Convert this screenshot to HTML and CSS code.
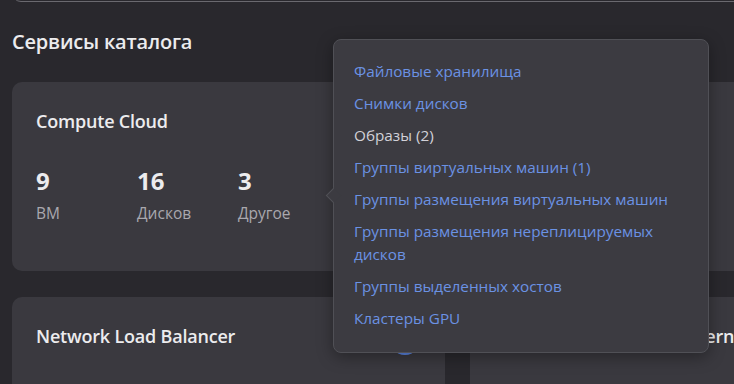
FILE: index.html
```html
<!DOCTYPE html>
<html lang="ru">
<head>
<meta charset="utf-8">
<title>Сервисы каталога</title>
<link rel="stylesheet" href="styles.css">
</head>
<body>
<div class="page">
  <div class="search"></div>
  <h2 class="heading">Сервисы каталога</h2>
  <div class="grid">
    <div class="card">
      <div class="card-head">
        <div class="card-title">Compute Cloud</div>
        <div class="ring"></div>
      </div>
      <div class="stats">
        <div class="stat"><div class="num">9</div><div class="lbl">ВМ</div></div>
        <div class="stat"><div class="num">16</div><div class="lbl">Дисков</div></div>
        <div class="stat"><div class="num">3</div><div class="lbl">Другое</div></div>
      </div>
    </div>
    <div class="card">
      <div class="card-head">
        <div class="card-title">Object Storage</div>
        <div class="ring"></div>
      </div>
    </div>
    <div class="card">
      <div class="card-head">
        <div class="card-title">Network Load Balancer</div>
        <div class="ring"></div>
      </div>
    </div>
    <div class="card">
      <div class="card-head">
        <div class="card-title">Managed Service for Kubernetes</div>
      </div>
    </div>
  </div>

  <div class="popup">
    <span class="arrow"></span>
    <ul class="menu">
      <li><a class="link">Файловые хранилища</a></li>
      <li><a class="link">Снимки дисков</a></li>
      <li><span class="plain">Образы (2)</span></li>
      <li><a class="link">Группы виртуальных машин (1)</a></li>
      <li><a class="link">Группы размещения виртуальных машин</a></li>
      <li><a class="link">Группы размещения нереплицируемых дисков</a></li>
      <li><a class="link">Группы выделенных хостов</a></li>
      <li><a class="link">Кластеры GPU</a></li>
    </ul>
  </div>
</div>
</body>
</html>
```

FILE: styles.css
```css
html, body {
  margin: 0;
  padding: 0;
  background: #29282d;
  overflow: hidden;
  width: 734px;
  height: 384px;
}
body {
  font-family: "Open Sans", "Noto Sans", sans-serif;
  color: #ececee;
}
.page {
  position: relative;
  display: flow-root;
  padding: 0 12px;
  height: 384px;
  overflow: hidden;
}
.search {
  height: 40px;
  margin-top: -40px;
  border: 1px solid #6a696f;
  border-radius: 9px;
  margin-right: -40px;
}
.heading {
  margin: 26px 0 0;
  font-size: 20px;
  line-height: 28px;
  font-weight: 600;
  color: #ececee;
  letter-spacing: -0.2px;
}
.grid {
  margin-top: 26px;
  display: grid;
  grid-template-columns: 433px 433px;
  column-gap: 25px;
  row-gap: 26px;
}
.card {
  background: #3a393f;
  border-radius: 10px;
  padding: 24px 24px 47px;
  min-height: 118px;
}
.card-head {
  display: flex;
  align-items: flex-start;
  justify-content: space-between;
  height: 30px;
}
.card-title {
  font-size: 18px;
  font-weight: 600;
  line-height: 30px;
  white-space: nowrap;
  letter-spacing: -0.2px;
  color: #ececee;
}
.ring {
  width: 26px;
  height: 26px;
  border: 3px solid #5b86e5;
  border-radius: 50%;
  flex: none;
  margin-top: 2px;
}
.stats {
  display: grid;
  grid-template-columns: 101px 101px 101px;
  margin-top: 30px;
}
.num {
  font-size: 24px;
  font-weight: 700;
  line-height: 30px;
  color: #ececee;
}
.lbl {
  margin-top: 6px;
  font-size: 15.5px;
  line-height: 22px;
  color: #a9a8ae;
}
.popup {
  position: absolute;
  left: 333px;
  top: 39px;
  width: 374px;
  height: 312px;
  background: #3c3b41;
  border: 1px solid #505056;
  border-radius: 8px;
  box-shadow: 0 4px 16px rgba(0,0,0,0.35);
}
.arrow {
  position: absolute;
  left: -6px;
  top: 150px;
  width: 10px;
  height: 10px;
  background: #3c3b41;
  border-left: 1px solid #505056;
  border-bottom: 1px solid #505056;
  transform: rotate(45deg);
}
.menu {
  list-style: none;
  margin: 0;
  padding: 20px 20px 0 20px;
  display: flex;
  flex-direction: column;
  gap: 9px;
}
.menu li {
  font-size: 15.3px;
  line-height: 23px;
}
.link {
  color: #6b92e4;
}
.plain {
  color: #d2d1d8;
}
```
